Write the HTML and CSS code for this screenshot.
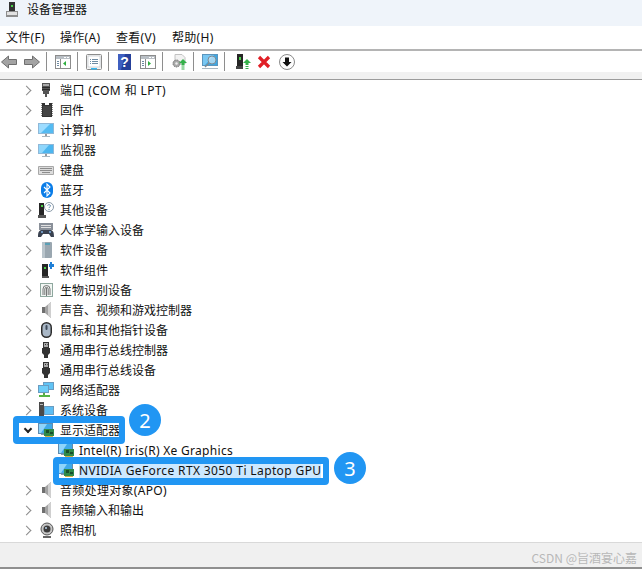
FILE: index.html
```html
<!DOCTYPE html>
<html lang="zh">
<head>
<meta charset="utf-8">
<title>设备管理器</title>
<link rel="stylesheet" href="styles.css">
</head>
<body>
<svg class="defs" width="0" height="0" aria-hidden="true">
  <defs>
    <g id="i-port"><path d="M4 1h8v8h-1v3H9v3H7v-3H5V9H4z" fill="#555"/><path d="M5 2h6v2H5z" fill="#aaa"/><path d="M4 5h8v1H4zM4 7h8v1H4z" fill="#2b2b2b"/></g>
    <g id="i-chip"><path d="M3 1.500h1M3 3.500h1M3 5.500h1M3 7.500h1M3 9.500h1M3 11.500h1M3 13.500h1M14 1.500h1M14 3.500h1M14 5.500h1M14 7.500h1M14 9.500h1M14 11.500h1M14 13.500h1" stroke="#8a8a8a"/><rect x="4" y="1" width="10" height="14" fill="#333"/><path d="M7 1h4v2H7z" fill="#fff"/><rect x="5" y="4" width="8" height="10" fill="#454545"/></g>
    <g id="i-pc"><rect x="0" y="1" width="16" height="11" fill="#8fb8d8"/><rect x="1" y="2" width="14" height="9" fill="#54bbf2"/><path d="M1 2h11L3 11H1z" fill="#9ddcff"/><path d="M7 12h2v2H7z" fill="#9a9a9a"/><path d="M4 14h8v1H4z" fill="#a9b7c2"/></g>
    <g id="i-monitor"><rect x="0" y="2" width="16" height="10" fill="#8fb8d8"/><rect x="1" y="3" width="14" height="8" fill="#4cb6ef"/><path d="M1 3h10L4 11H1z" fill="#8fd6fb"/><path d="M7 12h2v2H7z" fill="#9a9a9a"/><path d="M4 14h8v1H4z" fill="#a9b7c2"/></g>
    <g id="i-kbd"><rect x="0" y="4" width="16" height="9" rx="1" fill="#a8a8a8"/><rect x="1" y="5" width="14" height="7" fill="#dcdcdc"/><path d="M2 6h12v1H2zM2 8h12v1H2zM4 10h8v1H4z" fill="#8c8c8c"/></g>
    <g id="i-bt"><rect x="3" y="0" width="12" height="16" rx="6" fill="#0a7de8"/><path d="M6 5l6 6-3 3V2l3 3-6 6" fill="none" stroke="#fff" stroke-width="1.1"/></g>
    <g id="i-other"><path d="M1 1h5v12H1z" fill="#262626"/><path d="M3 3h2v2H3z" fill="#4ad04a"/><path d="M0 13h8v3H0z" fill="#555"/><circle cx="11" cy="5" r="4.500" fill="#fff" stroke="#8a9aa8"/><path d="M9.500 3.600c.4-1.400 3-1.200 3 .3 0 1-1.500 1-1.500 2.200M11 7v1" fill="none" stroke="#6a8fb0"/></g>
    <g id="i-hid"><rect x="1" y="1" width="14" height="7" fill="#8a9099"/><path d="M3 3h10v1H3zM3 5h10v1H3z" fill="#e0e0e0"/><path d="M0 15c0-5 1-7 4-7h8c3 0 4 2 4 7h-3l-2-3H5l-2 3z" fill="#3a4250"/><circle cx="4" cy="10" r="1" fill="#7fb0e0"/><circle cx="12" cy="10" r="1" fill="#7fb0e0"/></g>
    <g id="i-soft"><rect x="4" y="0" width="10" height="16" rx="1" fill="#9aa7b0"/><rect x="6" y="1" width="6" height="2" fill="#5a9fb5"/><path d="M4 0h3v16H4z" fill="#b9c4cb"/></g>
    <g id="i-comp"><path d="M4 2h6v12H4z" fill="#262626"/><path d="M6 5h2v2H6z" fill="#4ad04a"/><path d="M4 14h7v2H4z" fill="#555"/><path d="M11 2h1V0h2v2h2v3h-2v2h-2V5h-1z" fill="#1f7fd6"/></g>
    <g id="i-finger"><rect x="2.500" y="1.500" width="12" height="13" fill="#f1f6f3" stroke="#8fa89f"/><g fill="none" stroke="#555" stroke-width=".8"><path d="M5 13V7a3.500 3.500 0 0 1 7 0v6"/><path d="M6.800 13V7a1.700 1.700 0 0 1 3.400 0v6"/><path d="M8.500 6v8"/></g></g>
    <g id="i-sound"><path d="M4 5h3v6H4z" fill="#6f6f6f"/><path d="M7 5l6-5v16l-6-5z" fill="#a2a2a2"/><path d="M10 2.500v11l3 2.500V0z" fill="#cfcfcf"/></g>
    <g id="i-mouse"><rect x="3" y="0" width="11" height="16" rx="5.500" fill="#2c2c2c"/><rect x="4.500" y="1.500" width="8" height="13" rx="4" fill="#a9b7c6"/><rect x="7.500" y="3" width="2" height="5" rx="1" fill="#3d4a5a"/></g>
    <g id="i-usb"><path d="M5 0h6v6h1v5l-2 2v3H6v-3l-2-2V6h1z" fill="#333"/><path d="M6 1h4v4H6z" fill="#a8a8a8"/><path d="M7 2h1v1H7zM9 2h.6v1H9z" fill="#333"/></g>
    <g id="i-net"><rect x="5" y="0" width="11" height="8" fill="#6a9cc0"/><rect x="6" y="1" width="9" height="6" fill="#5fc3f5"/><rect x="0" y="3" width="11" height="8" fill="#6a9cc0"/><rect x="1" y="4" width="9" height="6" fill="#6dcdf8"/><path d="M5 11h2v2H5z" fill="#5aa84a"/><path d="M1 13h11v2H1z" fill="#55b545"/></g>
    <g id="i-sys"><path d="M1 0h5v14H1z" fill="#4a4a4a"/><path d="M2 2h3v1H2z" fill="#bbb"/><rect x="6" y="4" width="10" height="9" fill="#6a9cc0"/><rect x="7" y="5" width="8" height="7" fill="#5cbdf3"/></g>
    <g id="i-gpu"><rect x="0" y="1" width="15" height="11" fill="#5f8cb0"/><rect x="1" y="2" width="13" height="9" fill="#3fa9e8"/><path d="M1 2h8L3 11H1z" fill="#8fd4fa"/><path d="M3 12h3v1H3z" fill="#8a9aa8"/><rect x="6" y="7" width="10" height="7" fill="#2f8a4a"/><path d="M7 14h8v1H7z" fill="#d0b040"/><path d="M8 8h3v3H8zM12 10h3v2h-3z" fill="#174f2a"/></g>
    <g id="i-cam"><circle cx="9" cy="7" r="6" fill="#c5c5c5" stroke="#555"/><circle cx="9" cy="7" r="3.500" fill="#3c3c3c"/><circle cx="8" cy="6" r="1" fill="#b9d2e8"/><path d="M5 14h8v2H5z" fill="#666"/></g>
    <g id="t-window"><rect x=".5" y="1.500" width="15" height="13" fill="#fff" stroke="#8c8c8c"/><path d="M1 2h14v3H1z" fill="#b9bfc5"/><path d="M12 3h2v1h-2zM9 3h2v1H9z" fill="#fff"/><path d="M5.500 5v9" stroke="#8c8c8c"/><path d="M2 7h2v1H2zM2 9h2v1H2zM2 11h2v1H2z" fill="#6f8ba3"/></g>
  </defs>
</svg>

<div class="app">
  <header class="titlebar">
    <svg class="title-icon" viewBox="0 0 14 16"><path d="M4 0h6v9H4z" fill="#333"/><path d="M6 3h2v2H6z" fill="#4ad04a"/><path d="M1 9h12v6H1z" fill="#8d8d8d"/><path d="M2 10h10v3H2z" fill="#e2e2e2"/></svg>
    <span class="title-text">设备管理器</span>
  </header>

  <nav class="menubar">
    <span>文件(F)</span><span>操作(A)</span><span>查看(V)</span><span>帮助(H)</span>
  </nav>

  <div class="toolbar">
    <svg class="tool tool-arrow" viewBox="0 0 16 14"><path d="M7.500 1L.5 7l7 6V9.500h8v-5h-8z" fill="#a3a3a3" stroke="#6f6f6f"/></svg>
    <svg class="tool tool-arrow gap-arrow" viewBox="0 0 16 14"><path d="M8.500 1l7 6-7 6V9.500h-8v-5h8z" fill="#a3a3a3" stroke="#6f6f6f"/></svg>
    <i class="sep"></i>
    <svg class="tool" viewBox="0 0 16 16"><use href="#t-window"/><path d="M11 7v5L8 9.500z" fill="#2fae3f"/></svg>
    <i class="sep"></i>
    <svg class="tool" viewBox="0 0 16 16"><rect x=".5" y=".5" width="15" height="15" rx="1" fill="#f4f4f4" stroke="#8c8c8c"/><rect x="2" y="2" width="12" height="11" fill="#fff" stroke="#b9bfc5" stroke-width=".6"/><path d="M6 5h6v1H6zM6 7h6v1H6zM6 9h6v1H6z" fill="#6f8ba3"/><path d="M4 5h1v1H4zM4 7h1v1H4zM4 9h1v1H4z" fill="#6f8ba3"/><path d="M5 14h6v1.500H5z" fill="#35b7ef"/></svg>
    <i class="sep"></i>
    <svg class="tool tool-help" viewBox="0 0 13 16"><rect width="13" height="16" fill="#25409a"/><path d="M0 0h7L3 16H0z" fill="#3f5fc0"/><text x="6.500" y="13" class="help-mark">?</text></svg>
    <svg class="tool after-help" viewBox="0 0 16 16"><use href="#t-window"/><path d="M8 7v5l3-2.500z" fill="#2fae3f"/></svg>
    <i class="sep"></i>
    <svg class="tool" viewBox="0 0 16 16"><path d="M4 .5h7l3 3V10H4z" fill="#f2f2f2" stroke="#c2c2c2"/><circle cx="5.500" cy="9.500" r="3.500" fill="#a8a8a8" stroke="#777" stroke-dasharray="1.500 .8"/><circle cx="5.500" cy="9.500" r="1.200" fill="#eee"/><path d="M12 5l4 4h-2.500v2.500h-3V9H8z" fill="#35b14a"/><path d="M10.500 12.500h3v1h-3zM10.500 14.500h3v1h-3z" fill="#35b14a"/></svg>
    <i class="sep"></i>
    <svg class="tool" viewBox="0 0 16 16"><rect x=".5" y=".5" width="15" height="11" fill="#3ea7e2" stroke="#5b95bd"/><path d="M1 1h11L3 11H1z" fill="#79c7f2"/><circle cx="10" cy="6" r="4" fill="#cfeafa" fill-opacity=".7" stroke="#7d8a94"/><path d="M7 9l-4 4" stroke="#7d8a94" stroke-width="1.500"/><path d="M0 14.500h16" stroke="#a9b7c2"/></svg>
    <i class="sep"></i>
    <svg class="tool tool-dev" viewBox="0 0 16 16"><path d="M2 0h6v12H2z" fill="#262626"/><path d="M4 3h2v3H4z" fill="#4ad04a"/><path d="M1 12h7v3H1z" fill="#444"/><path d="M12 5l4 4h-2.500v2h-3V9H8z" fill="#35b14a"/><path d="M10.500 12h3v1h-3zM10.500 14h3v1h-3z" fill="#35b14a"/></svg>
    <svg class="tool tool-x" viewBox="0 0 14 14"><path d="M2 2l10 10M12 2L2 12" stroke="#e01f26" stroke-width="3.200"/></svg>
    <svg class="tool tool-down" viewBox="0 0 16 16"><circle cx="8" cy="8" r="7.500" fill="#fdfdfd" stroke="#8a8a8a"/><path d="M6 3.500h4V8h2.500L8 12.500 3.500 8H6z" fill="#111"/></svg>
  </div>
  <div class="toolband"></div>

  <main class="tree">
    <div class="row"><span class="chev"></span><svg class="ico"><use href="#i-port"/></svg><span class="wide">端口 (COM 和 LPT)</span></div>
    <div class="row"><span class="chev"></span><svg class="ico"><use href="#i-chip"/></svg><span>固件</span></div>
    <div class="row"><span class="chev"></span><svg class="ico"><use href="#i-pc"/></svg><span>计算机</span></div>
    <div class="row"><span class="chev"></span><svg class="ico"><use href="#i-monitor"/></svg><span>监视器</span></div>
    <div class="row"><span class="chev"></span><svg class="ico"><use href="#i-kbd"/></svg><span>键盘</span></div>
    <div class="row"><span class="chev"></span><svg class="ico"><use href="#i-bt"/></svg><span>蓝牙</span></div>
    <div class="row"><span class="chev"></span><svg class="ico"><use href="#i-other"/></svg><span>其他设备</span></div>
    <div class="row"><span class="chev"></span><svg class="ico"><use href="#i-hid"/></svg><span>人体学输入设备</span></div>
    <div class="row"><span class="chev"></span><svg class="ico"><use href="#i-soft"/></svg><span>软件设备</span></div>
    <div class="row"><span class="chev"></span><svg class="ico"><use href="#i-comp"/></svg><span>软件组件</span></div>
    <div class="row"><span class="chev"></span><svg class="ico"><use href="#i-finger"/></svg><span>生物识别设备</span></div>
    <div class="row"><span class="chev"></span><svg class="ico"><use href="#i-sound"/></svg><span>声音、视频和游戏控制器</span></div>
    <div class="row"><span class="chev"></span><svg class="ico"><use href="#i-mouse"/></svg><span>鼠标和其他指针设备</span></div>
    <div class="row"><span class="chev"></span><svg class="ico"><use href="#i-usb"/></svg><span>通用串行总线控制器</span></div>
    <div class="row"><span class="chev"></span><svg class="ico"><use href="#i-usb"/></svg><span>通用串行总线设备</span></div>
    <div class="row"><span class="chev"></span><svg class="ico"><use href="#i-net"/></svg><span>网络适配器</span></div>
    <div class="row"><span class="chev"></span><svg class="ico"><use href="#i-sys"/></svg><span>系统设备</span></div>
    <div class="row"><span class="chev open"></span><svg class="ico"><use href="#i-gpu"/></svg><span>显示适配器</span></div>
    <div class="row child"><svg class="ico"><use href="#i-gpu"/></svg><span class="wide-soft">Intel(R) Iris(R) Xe Graphics</span></div>
    <div class="row child"><svg class="ico"><use href="#i-gpu"/></svg><span class="selected">NVIDIA GeForce RTX 3050 Ti Laptop GPU</span></div>
    <div class="row"><span class="chev"></span><svg class="ico"><use href="#i-sound"/></svg><span class="wide-soft">音频处理对象(APO)</span></div>
    <div class="row"><span class="chev"></span><svg class="ico"><use href="#i-sound"/></svg><span>音频输入和输出</span></div>
    <div class="row"><span class="chev"></span><svg class="ico"><use href="#i-cam"/></svg><span>照相机</span></div>
  </main>

  <footer class="statusbar"><span class="watermark">CSDN @旨酒宴心嘉</span></footer>

  <div class="callout callout-a"></div>
  <div class="badge badge-a">2</div>
  <div class="callout callout-b"></div>
  <div class="badge badge-b">3</div>
</div>
</body>
</html>
```

FILE: styles.css
```css
* { box-sizing: border-box; }
html, body { margin: 0; height: 100%; }
body {
  background: #fff;
  color: #111;
  font-family: "Noto Sans", "Noto Sans CJK SC", sans-serif;
  font-size: 12px;
  overflow: hidden;
}
.defs { position: absolute; }
.app {
  position: relative;
  display: flex;
  flex-direction: column;
  width: 642px;
  height: 569px;
  overflow: hidden;
}
.titlebar {
  display: flex;
  align-items: center;
  flex: 0 0 26px;
  padding: 0 0 7px 5px;
  background: #eff4fa;
}
.title-icon { width: 14px; height: 16px; margin-right: 8px; }
.title-text { font-size: 12px; line-height: 18px; }
.menubar {
  display: flex;
  align-items: center;
  gap: 16px;
  flex: 0 0 23px;
  padding: 0 0 2px 6px;
  background: #fff;
  letter-spacing: .3px;
}
.menubar span { width: 40px; white-space: nowrap; }
.menubar span:first-child { width: 38px; }
.toolbar {
  display: flex;
  align-items: center;
  flex: 0 0 23px;
  padding-left: 1px;
  background: #fff;
  border-top: 2px solid #b4b4b4;
}
.tool { display: block; width: 16px; height: 16px; flex: none; }
.tool-arrow { height: 14px; }
.gap-arrow { margin-left: 7px; }
.sep {
  display: block;
  flex: none;
  width: 1px;
  height: 19px;
  margin: 0 8px 0 6px;
  background: #8e8e8e;
}
.tool-help { width: 13px; margin-left: 1px; }
.help-mark { fill: #fff; font-size: 14px; font-weight: 700; text-anchor: middle; font-family: "Liberation Sans", sans-serif; }
.after-help { margin-left: 9px; }
.tool-dev { margin-left: 2px; }
.tool-x { width: 14px; height: 14px; margin-left: 6px; }
.tool-down { margin-left: 8px; }
.toolband {
  flex: 0 0 8px;
  background: #f1f1f1;
  border-bottom: 1px solid #9c9c9c;
}
.tree {
  flex: 0 0 462px;
  overflow: hidden;
  background: #fff;
}
.row {
  display: flex;
  align-items: center;
  height: 20px;
  padding-left: 23px;
  line-height: 20px;
  white-space: nowrap;
}
.row > span:not(.chev) { margin-top: 2px; }
.wide { letter-spacing: .4px; }
.wide-soft { letter-spacing: .3px; }
.chev {
  flex: none;
  width: 7px;
  height: 7px;
  margin: 0 8px 0 0;
  border-top: 1.5px solid #8a8a8a;
  border-right: 1.5px solid #8a8a8a;
  transform: rotate(45deg);
}
.chev.open {
  width: 6px;
  height: 6px;
  margin-right: 9px;
  border-color: #222;
  border-width: 2px;
  transform: translate(2px, -1px) rotate(135deg);
}
.ico { flex: none; width: 16px; height: 16px; margin-right: 6px; }
.row.child { padding-left: 58px; }
.row.child .ico { margin-right: 5px; }
.selected {
  display: block;
  background: #cce8ff;
  letter-spacing: .38px;
}
.statusbar {
  position: relative;
  flex: 1;
  background: #f0f0f0;
  border-top: 1px solid #d9d9d9;
  border-bottom: 2px solid #8f8f8f;
}
.watermark {
  position: absolute;
  right: 5px;
  bottom: 1px;
  color: #b8b8b8;
  font-family: "Noto Sans CJK SC", sans-serif;
  font-size: 12px;
  line-height: 16px;
}
.callout {
  position: absolute;
  border-style: solid;
  border-color: #2196f3;
  border-width: 7px 6px;
  border-radius: 4px;
}
.callout-a { left: 13px; top: 416px; width: 112px; height: 28px; }
.callout-b { left: 53px; top: 457px; width: 276px; height: 28px; }
.badge {
  position: absolute;
  display: flex;
  align-items: center;
  justify-content: center;
  width: 32px;
  height: 32px;
  border-radius: 50%;
  background: #2196f3;
  color: #fff;
  font-family: "Noto Sans", sans-serif;
  font-size: 20px;
}
.badge-a { left: 129px; top: 404px; }
.badge-b { left: 334px; top: 452px; }
```
